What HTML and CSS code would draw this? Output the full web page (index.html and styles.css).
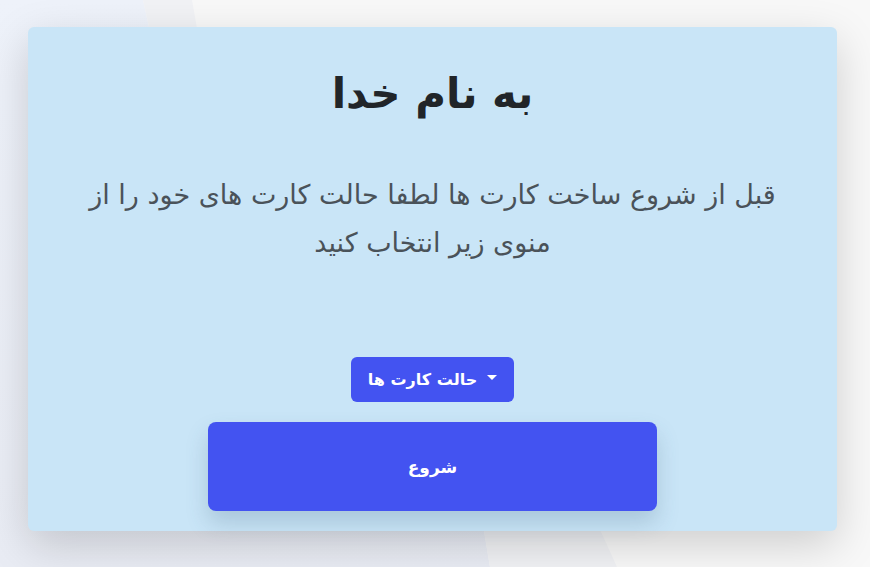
FILE: index.html
```html
<!DOCTYPE html>
<html lang="fa" dir="rtl">
<head>
<meta charset="utf-8">
<link rel="stylesheet" href="styles.css">
</head>
<body>
<div class="bg">
  <div class="shape shape-a"></div>
  <div class="shape shape-b"></div>
</div>
<main class="wrap">
  <section class="card">
    <h1 class="title">به نام خدا</h1>
    <p class="lead">قبل از شروع ساخت کارت ها لطفا حالت کارت های خود را از منوی زیر انتخاب کنید</p>
    <div class="actions">
      <button class="dropdown"><span class="caret"></span>حالت کارت ها</button>
      <button class="start">شروع</button>
    </div>
  </section>
</main>
</body>
</html>
```
FILE: styles.css
```css
html, body {
  margin: 0;
  padding: 0;
  height: 100%;
}
body {
  background: #f8f8f8;
  font-family: "DejaVu Sans", "Noto Sans", sans-serif;
  overflow: hidden;
  position: relative;
}
.bg {
  position: absolute;
  inset: 0;
  overflow: hidden;
  z-index: 0;
}
.shape {
  position: absolute;
  inset: 0;
}
.shape-a {
  background: linear-gradient(180deg, #eef2fa, #e9ecf4);
  clip-path: polygon(0 0, 143px 0, 153px 45px, 300px 280px, 483px 525px, 490px 567px, 0 567px);
}
.shape-b {
  background: #f1f2f5;
  clip-path: polygon(143px 0, 192px 0, 200px 45px, 380px 280px, 598px 525px, 617px 567px, 490px 567px, 483px 525px, 300px 280px, 153px 45px);
}
.wrap {
  position: relative;
  z-index: 1;
  padding: 27px 33px 36px 28px;
  direction: ltr;
}
.card {
  direction: rtl;
  background: #c9e5f7;
  border-radius: 6px;
  height: 504px;
  box-sizing: border-box;
  box-shadow: 0 14px 44px rgba(0, 0, 0, 0.17);
  display: flex;
  flex-direction: column;
  align-items: center;
  padding: 42px 60px 20px;
}
.title {
  margin: 0;
  font-size: 42px;
  font-weight: bold;
  color: #212529;
  line-height: 1.2;
}
.lead {
  margin: 52px 0 0;
  font-size: 27px;
  line-height: 48px;
  color: #4a5259;
  text-align: center;
}
.actions {
  margin-top: auto;
  display: flex;
  flex-direction: column;
  align-items: center;
  gap: 20px;
}
.dropdown {
  font-family: inherit;
  border: 0;
  background: #4353f1;
  color: #fff;
  font-size: 16px;
  font-weight: bold;
  height: 45px;
  padding: 0 16px;
  border-radius: 6px;
  display: flex;
  align-items: center;
  gap: 10px;
  width: 163px;
  justify-content: center;
}
.caret {
  width: 0;
  height: 0;
  border-left: 5px solid transparent;
  border-right: 5px solid transparent;
  border-top: 5px solid #fff;
  margin-bottom: 4px;
}
.start {
  font-family: inherit;
  border: 0;
  background: #4353f1;
  color: #fff;
  font-size: 17px;
  font-weight: bold;
  width: 449px;
  height: 89px;
  border-radius: 8px;
  box-shadow: 0 12px 22px rgba(60, 90, 120, 0.22);
}
```
